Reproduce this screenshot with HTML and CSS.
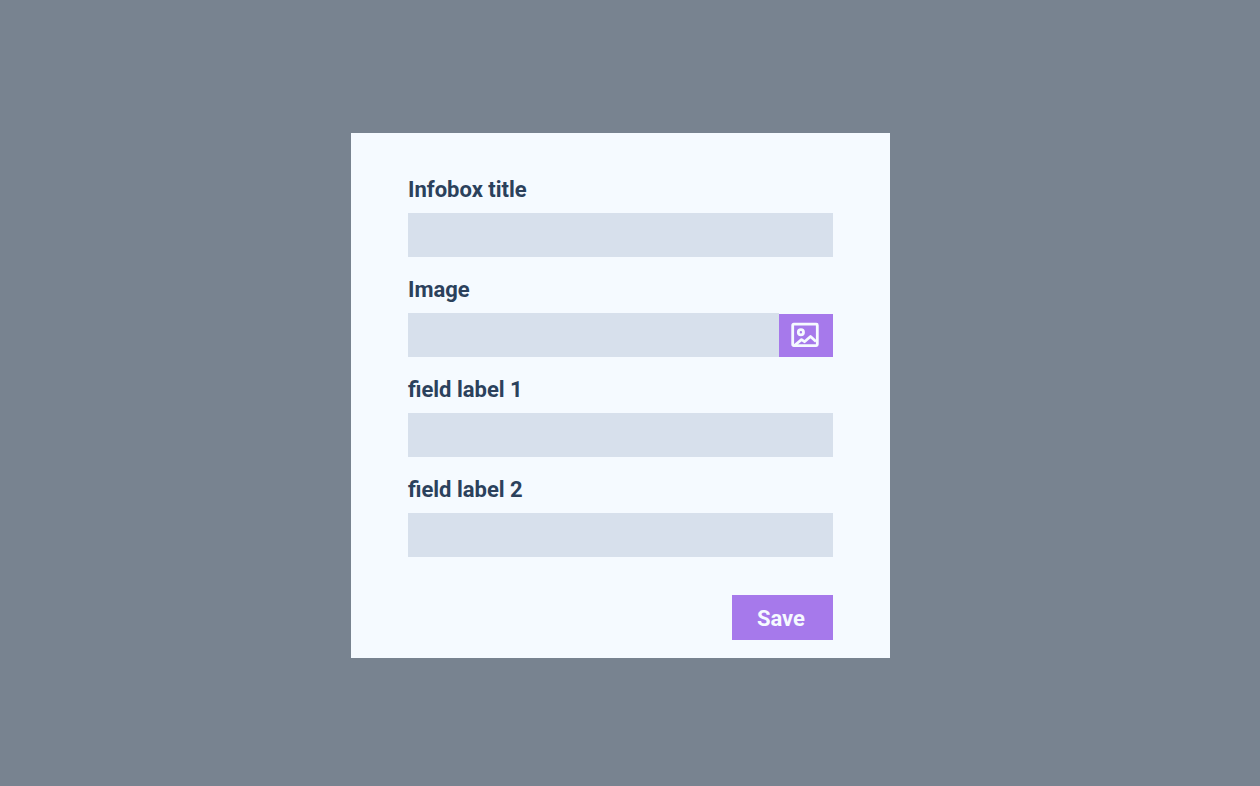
FILE: index.html
```html
<!DOCTYPE html>
<html lang="en">
<head>
<meta charset="utf-8">
<meta name="viewport" content="width=device-width, initial-scale=1">
<title>Infobox</title>
<link rel="stylesheet" href="styles.css">
</head>
<body class="backdrop">
  <form class="dialog">
    <div class="field">
      <label class="label" for="title">Infobox title</label>
      <input class="input" id="title" type="text">
    </div>
    <div class="field">
      <label class="label" for="image">Image</label>
      <div class="picker">
        <input class="input" id="image" type="text">
        <button class="pick" type="button" aria-label="Choose image">
          <svg class="icon" viewBox="0 0 28 26" fill="none" stroke="currentColor" stroke-width="2.8" stroke-linejoin="round">
            <rect x="1.700" y="2.200" width="24.600" height="21.400" rx="1"/>
            <circle cx="9.900" cy="10.200" r="2.600"/>
            <path d="M3.500 23.500 10.500 17.700l3 2 6-5.200 5.500 5"/>
          </svg>
        </button>
      </div>
    </div>
    <div class="field">
      <label class="label" for="field1">field label 1</label>
      <input class="input" id="field1" type="text">
    </div>
    <div class="field">
      <label class="label" for="field2">field label 2</label>
      <input class="input" id="field2" type="text">
    </div>
    <button class="save" type="submit">Save</button>
  </form>
</body>
</html>
```
FILE: styles.css
```css
* {
  box-sizing: border-box;
}

.backdrop {
  margin: 0;
  min-height: 100vh;
  padding: 5px 39px 0 20px;
  display: flex;
  align-items: center;
  justify-content: center;
  background: #788390;
  font-family: Roboto, sans-serif;
}

.dialog {
  width: 100%;
  max-width: 539px;
  padding: 44px 57px 18px;
  display: flex;
  flex-direction: column;
  gap: 20px;
  background: #f5faff;
}

.field {
  display: flex;
  flex-direction: column;
  gap: 10px;
}

.label {
  font-size: 22px;
  line-height: 26px;
  font-weight: 700;
  color: #2b415c;
}

.input {
  width: 100%;
  min-width: 0;
  height: 44px;
  padding: 0 12px;
  border: 0;
  border-radius: 0;
  background: #d7e0ec;
  color: #2b415c;
  font: 400 20px Roboto, sans-serif;
}

.picker {
  display: flex;
  align-items: flex-end;
}

.pick {
  flex: none;
  width: 54px;
  height: 43px;
  padding: 0 2px 1px 0;
  border: 0;
  display: flex;
  align-items: center;
  justify-content: center;
  background: #a679eb;
  color: #f5faff;
}

.icon {
  width: 28px;
  height: 26px;
}

.save {
  align-self: flex-end;
  margin-top: 18px;
  height: 45px;
  padding: 2px 28px 0 25px;
  border: 0;
  background: #a679eb;
  color: #f5faff;
  font: 700 22px Roboto, sans-serif;
}
```
